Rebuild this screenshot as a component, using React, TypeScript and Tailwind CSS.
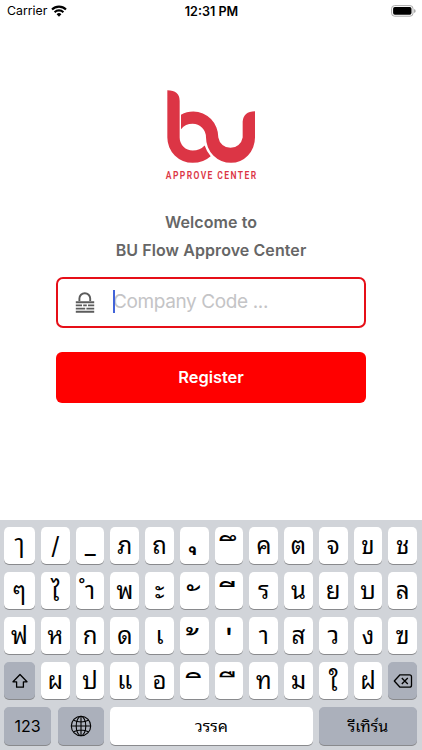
import React from "react";

type Glyph = { t: string; cls?: string };

const k = (t: string, cls = ""): Glyph => ({ t, cls });
const m = (t: string, cls = ""): Glyph => ({ t: "\u00a0" + t, cls: "text-[34px] " + cls });

const row1: Glyph[] = [k("ๅ", "-translate-y-[2px]"), k("/"), k("_"), k("ภ"), k("ถ"), m("ุ", "-translate-x-[0px] -translate-y-[14px]"), m("ึ", "translate-x-[4px] translate-y-[5px]"), k("ค"), k("ต"), k("จ"), k("ข"), k("ช")];
const row2: Glyph[] = [k("ๆ"), k("ไ", "translate-y-[2px]"), k("ำ"), k("พ"), k("ะ"), m("ั", "translate-x-[1px] translate-y-[9px]"), m("ี", "translate-x-[4px] translate-y-[6px]"), k("ร"), k("น"), k("ย"), k("บ"), k("ล")];
const row3: Glyph[] = [k("ฟ"), k("ห"), k("ก"), k("ด"), k("เ"), m("้", "translate-x-[1px] translate-y-[9px]"), m("่", "translate-y-[9px]"), k("า"), k("ส"), k("ว"), k("ง"), k("ฃ")];
const row4: Glyph[] = [k("ผ"), k("ป"), k("แ"), k("อ"), m("ิ", "translate-x-[5px] translate-y-[7px]"), m("ื", "translate-x-[4px] translate-y-[6px]"), k("ท"), k("ม"), k("ใ", "translate-y-[2px]"), k("ฝ")];

function Key({ g }: { g: Glyph }) {
  return (
    <div className="flex h-full min-w-0 flex-1 items-center justify-center rounded-[5px] bg-white text-[24px] leading-none font-normal shadow-[0_1px_0_#898a8d] first:w-[31px] first:flex-none">
      <span className={g.cls}>{g.t}</span>
    </div>
  );
}

function Row({ keys }: { keys: Glyph[] }) {
  return (
    <div className="flex h-[37px] gap-[6px]">
      {keys.map((g, i) => (
        <Key key={i} g={g} />
      ))}
    </div>
  );
}

function Logo() {
  return (
    <svg viewBox="48 27 270 224" className="h-[75px] w-[90px]" fill="#dc3545">
      <path d="M52 30Q89 30 89 62V172A39 39 0 0 0 128 211Q150 211 164 196Q170 215 182 228Q160 248 128 248A76 76 0 0 1 52 172Z" />
      <path d="M93 104Q110 94 130 94A75 78 0 0 1 205 172A37 37 0 0 0 278 172V124Q280 94 315 93V172A72 76 0 0 1 243 248A75 76 0 0 1 168 172A40 41 0 0 0 128 131Q106 131 93 147Z" />
    </svg>
  );
}

function LockIcon() {
  return (
    <svg width="20" height="22" viewBox="0 0 20 22" fill="none" stroke="#5c5c5c" strokeWidth="1.9">
      <path d="M4.4 9V6.6a5.4 5.4 0 0 1 10.8 0V9" />
      <path d="M.8 10.2h18.4M.8 13.4h6.2M8.2 13.4h3.6M13 13.4h6.2M.8 16.6h9.4M11.4 16.6h7.8M.8 19.8h18.4" />
    </svg>
  );
}

export default function App() {
  return (
    <div className="flex h-[750px] w-[422px] flex-col overflow-hidden bg-white font-[Inter,'Noto_Sans_Thai_Looped','Noto_Sans',sans-serif] text-black">
      <header className="grid h-[22px] grid-cols-3 items-center pl-[7px] pr-[6px] text-[12px]">
        <div className="flex items-center gap-[4px]">
          <span className="text-[12.3px]">Carrier</span>
          <svg width="16" height="12" viewBox="0 0 16 12" fill="none" stroke="#000" strokeWidth="2.1">
            <path d="M1 4.5a10 10 0 0 1 14 0M3.6 7.2a6.3 6.3 0 0 1 8.8 0" />
            <path d="M5.6 9.2a3.5 3.5 0 0 1 4.8 0L8 11.7z" fill="#000" stroke="none" />
          </svg>
        </div>
        <span className="pt-[2px] text-center text-[12.6px] font-semibold">12:31 PM</span>
        <svg className="justify-self-end" width="25" height="12" viewBox="0 0 25 12">
          <rect x=".6" y=".6" width="21.4" height="10.6" rx="3" fill="#fff" stroke="#aaa" />
          <rect x="2.1" y="2.1" width="18.4" height="7.6" rx="1.7" />
          <path d="M23.2 4v4q1.4-.7 1.4-2t-1.4-2" fill="#999" />
        </svg>
      </header>

      <main className="flex h-[498px] flex-col items-center pt-[67px]">
        <Logo />
        <div className="mt-[4px] h-[14px] origin-center scale-x-[0.74] whitespace-nowrap pl-[2px] font-['Roboto',sans-serif] text-[11.5px] font-semibold leading-[14px] tracking-[1.9px] text-[#dc3545]">
          APPROVE CENTER
        </div>
        <h1 className="mt-[26px] text-center text-[16px] font-semibold leading-[28px] tracking-[0.08px] text-[#666]">
          Welcome to
          <br />
          BU Flow Approve Center
        </h1>
        <div className="mt-[13px] flex h-[51px] w-[310px] items-center rounded-[7px] border-2 border-[#e60f18] pl-[17px]">
          <LockIcon />
          <span className="ml-[18px] h-[23px] w-[2px] -translate-y-px bg-[#4264d9]" />
          <span className="-ml-[2px] text-[19px] tracking-[-0.38px] text-[#c4c4c6]">Company Code ...</span>
        </div>
        <button className="mt-[24px] h-[51px] w-[310px] rounded-[6px] bg-[#ff0000] text-[16.4px] font-semibold text-white">
          Register
        </button>
      </main>

      <section className="flex h-[230px] flex-col gap-[8px] bg-[#d1d4d9] pt-[7px] pr-[5px] pl-[4px]">
        <Row keys={row1} />
        <Row keys={row2} />
        <Row keys={row3} />
        <div className="flex h-[37px] gap-[6px]">
          <div className="flex w-[31px] items-center justify-center rounded-[5px] bg-[#abb0bb] shadow-[0_1px_0_#898a8d]">
            <svg width="16" height="16" viewBox="0 0 16 16" fill="none" stroke="#000" strokeWidth="1.3" strokeLinejoin="round">
              <path d="M8 1.5L1 8.8h3.6v5.4h6.8V8.8H15z" />
            </svg>
          </div>
          {row4.map((g, i) => (
            <div key={i} className="flex min-w-0 flex-1">
              <div className="flex min-w-0 flex-1 items-center justify-center rounded-[5px] bg-white text-[24px] leading-none font-normal shadow-[0_1px_0_#898a8d]">
                <span className={g.cls}>{g.t}</span>
              </div>
            </div>
          ))}
          <div className="flex min-w-0 flex-1 items-center justify-center rounded-[5px] bg-[#abb0bb] shadow-[0_1px_0_#898a8d]">
            <svg width="20" height="16" viewBox="0 0 20 16" fill="none" stroke="#000" strokeWidth="1.3" strokeLinejoin="round">
              <path d="M7 1.8h9.5a2 2 0 0 1 2 2v8.4a2 2 0 0 1-2 2H7L1.3 8zM8.8 5l6 6M14.8 5l-6 6" />
            </svg>
          </div>
        </div>
        <div className="flex h-[38px] gap-[6px] text-[16px]">
          <div className="flex w-[47px] items-center justify-center rounded-[5px] bg-[#abb0bb] shadow-[0_1px_0_#898a8d]">123</div>
          <div className="ml-[1px] flex w-[46px] items-center justify-center rounded-[5px] bg-[#abb0bb] shadow-[0_1px_0_#898a8d]">
            <svg width="22" height="22" viewBox="0 0 22 22" fill="none" stroke="#000" strokeWidth="1.1">
              <circle cx="11" cy="11" r="9.7" />
              <ellipse cx="11" cy="11" rx="4.8" ry="9.7" />
              <path d="M11 1.3v19.4M1.3 11h19.4M3.5 5.3q7.5 3.4 15 0M3.5 16.7q7.5-3.4 15 0" />
            </svg>
          </div>
          <div className="flex flex-1 items-center justify-center rounded-[5px] bg-white shadow-[0_1px_0_#898a8d]">วรรค</div>
          <div className="flex w-[98px] items-center justify-center rounded-[5px] bg-[#abb0bb] shadow-[0_1px_0_#898a8d]">รีเทิร์น</div>
        </div>
      </section>
    </div>
  );
}
